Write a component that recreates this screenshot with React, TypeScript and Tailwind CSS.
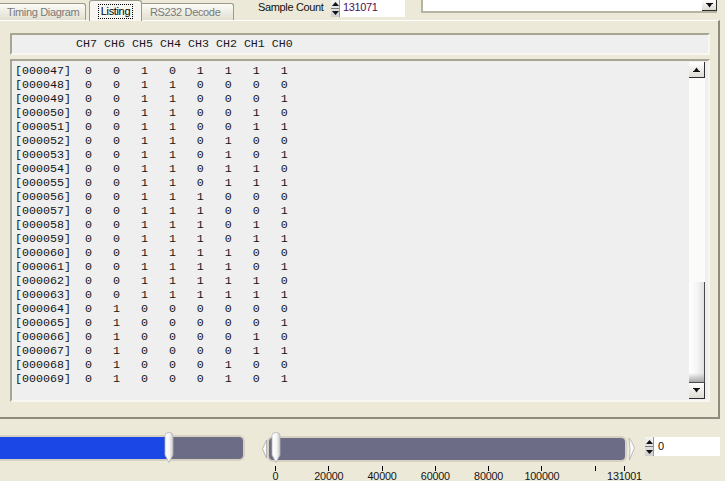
import React from "react";

const rows = Array.from({ length: 23 }, (_, i) => 47 + i);
const bits = (n: number) => n.toString(2).padStart(8, "0").split("");
const ticks = [0, 20000, 40000, 60000, 80000, 100000, 120000, 131001];
const labeled = new Set([0, 20000, 40000, 60000, 80000, 100000, 131001]);

function Thumb({ id }: { id: string }) {
  return (
    <svg width="10" height="31" viewBox="0 0 10 31">
      <defs>
        <linearGradient id={id} x1="0" x2="1" y1="0" y2="0">
          <stop offset="0" stopColor="#ffffff" />
          <stop offset="0.55" stopColor="#f6f6f6" />
          <stop offset="1" stopColor="#c9c9c9" />
        </linearGradient>
      </defs>
      <path d="M1 3.5 Q1 0.5 5 0.5 Q9 0.5 9 3.5 V23 L5 30.5 L1 23 Z" fill={`url(#${id})`} stroke="#b4b4b4" strokeWidth="0.8" />
    </svg>
  );
}

function Arrow({ down }: { down?: boolean }) {
  return (
    <svg width="7" height="5" viewBox="0 0 7 5">
      {down ? (
        <path d="M0 0H7V1H0Z M1 1H6L3.5 4.5Z" fill="#111" />
      ) : (
        <path d="M3.5 0.5L6 4H1Z M0 4H7V5H0Z" fill="#111" />
      )}
    </svg>
  );
}

function ScrollBtn({ down }: { down?: boolean }) {
  return (
    <div className="w-[16px] h-[16px] shrink-0 bg-gradient-to-b from-white to-[#dedcd6] border-r border-b border-[#2e2e2e] flex items-center justify-center">
      <Arrow down={down} />
    </div>
  );
}

function Spinner({ h }: { h: string }) {
  return (
    <div className={`w-[9px] ${h} flex flex-col bg-gradient-to-b from-[#f4f4f4] to-[#cfcfcf] border-r border-[#9a9a9a]`}>
      <div className="flex-1 flex items-center justify-center border-b border-[#7a7a7a]">
        <svg width="7" height="4" viewBox="0 0 7 4"><path d="M3.5 0L7 4H0Z" fill="#111" /></svg>
      </div>
      <div className="flex-1 flex items-center justify-center">
        <svg width="7" height="4" viewBox="0 0 7 4"><path d="M0 0H7L3.5 4Z" fill="#111" /></svg>
      </div>
    </div>
  );
}

export default function App() {
  const tx = (v: number) => 13 + (v * 349) / 131001;
  return (
    <div className="w-[725px] h-[481px] bg-[#ece9d8] overflow-hidden flex flex-col text-[11px] tracking-[-0.35px] text-black font-['Liberation_Sans',sans-serif]">
      {/* top bar */}
      <div className="h-[20px] flex shrink-0 relative z-10">
        <div className="w-[86px] h-[17px] mt-[3px] border-t border-r border-[#9c9a8c] rounded-tr-[3px] bg-gradient-to-b from-[#fbfbf8] to-[#e2dfd0] text-[#7a7a7a] pl-[7px] leading-[16px]">
          Timing Diagram
        </div>
        <div className="ml-[3px] w-[53px] h-[21px] border-t border-l border-r border-[#9c9a8c] rounded-t-[3px] bg-[#f6f5f0] flex justify-center pt-[3px]">
          <span className="border border-dotted border-black px-[2px] h-[15px] leading-[13px]">Listing</span>
        </div>
        <div className="w-[92px] h-[17px] mt-[3px] border-t border-r border-[#9c9a8c] rounded-tr-[3px] bg-gradient-to-b from-[#fbfbf8] to-[#e2dfd0] text-[#7a7a7a] pl-[8px] leading-[16px]">
          RS232 Decode
        </div>
        <div className="ml-[24px] w-[73px] leading-[15px] text-[#111]">Sample Count</div>
        <div className="flex h-[17px]">
          <Spinner h="h-[17px]" />
          <div className="w-[65px] h-[17px] bg-white pl-[3px] leading-[15px] text-[#4d0f55]">131071</div>
        </div>
        <div className="ml-[16px] w-[296px] h-[13px] bg-white border-l-2 border-b-2 border-[#b7b3a2] flex justify-end">
          <div className="w-[15px] h-[11px] bg-gradient-to-b from-white to-[#dcdad3] border-r border-b border-[#2e2e2e] flex items-center justify-center">
            <Arrow down />
          </div>
        </div>
      </div>

      {/* panel */}
      <div className="w-[720px] h-[399px] shrink-0 border-t border-t-white border-r-2 border-r-[#8e8b7e] border-b-2 border-b-[#8e8b7e] pt-[12px] pl-[10px] font-['Liberation_Mono',monospace] text-[11.67px] tracking-normal">
        <div className="w-[700px] h-[22px] border-t-2 border-l-2 border-[#a9a593] border-b-2 border-r-2 border-b-[#f7f6f1] border-r-[#f7f6f1] bg-[#efefef] pl-[64px] leading-[18px] whitespace-pre text-[#1a1a1a]">
          CH7 CH6 CH5 CH4 CH3 CH2 CH1 CH0
        </div>
        <div className="mt-[4px] w-[700px] h-[343px] border-t-2 border-l-2 border-[#a9a593] border-b-2 border-r-2 border-b-[#f7f6f1] border-r-[#f7f6f1] bg-[#efefef] flex">
          <div className="flex-1 pl-[3px] pt-[3px]">
            {rows.map((n) => (
              <div key={n} className="h-[14px] leading-[14px] whitespace-pre text-[#141414]">
                {`[${String(n).padStart(6, "0")}]  ` + bits(n).join("   ")}
              </div>
            ))}
          </div>
          <div className="w-[16px] mr-[3px] my-[1px] bg-[#fbfbf9] flex flex-col">
            <ScrollBtn />
            <div className="flex-1 flex flex-col justify-end">
              <div className="h-[101px] border-r border-b border-[#4a4a4a] bg-gradient-to-r from-white via-[#f6f6f6] to-[#e2e2e2] flex flex-col">
                <div className="flex-1" />
                <div className="h-[9px] bg-gradient-to-b from-transparent to-[#a8a8a8]" />
              </div>
            </div>
            <ScrollBtn down />
          </div>
        </div>
      </div>

      {/* bottom */}
      <div className="flex items-start flex-1">
        <div className="relative w-[245px] h-[26px] mt-[16px]">
          <div className="w-full h-full border-y-2 border-r-2 border-[#d6d2c1] rounded-r-[6px] overflow-hidden flex">
            <div className="w-[167px] bg-[#1b47e6]" />
            <div className="flex-1 bg-[#6d6c87]" />
          </div>
          <div className="absolute left-[164px] top-[-3px]">
            <Thumb id="t1" />
          </div>
        </div>

        <div className="ml-[17px] mt-[17px] w-[374px] relative">
          <div className="flex items-center h-[26px]">
            <svg width="5" height="20" viewBox="0 0 5 20">
              <path d="M4.5 1 L0.5 10 L4.5 19 Z" fill="#fafafa" stroke="#a8a8a8" strokeWidth="0.8" />
            </svg>
            <div className="w-[361px] h-[26px] border-2 border-[#d6d2c1] rounded-[6px] bg-[#6d6c87]" />
            <svg width="8" height="24" viewBox="0 0 8 24" className="ml-[1px]">
              <path d="M1 1 Q5 6 6.5 11 L1.5 23 L2 13 Z" fill="#fafafa" stroke="#b0b0b0" strokeWidth="0.8" />
            </svg>
          </div>
          <div className="absolute left-[9px] top-[-4px]">
            <Thumb id="t2" />
          </div>
          <div className="relative h-[20px] text-[10.8px] tracking-[-0.2px] text-[#151515]">
            {ticks.map((v) => (
              <React.Fragment key={v}>
                <div className="absolute top-[4px] w-[1px] h-[5px] bg-black" style={{ left: Math.round(tx(v)) }} />
                {labeled.has(v) && (
                  <div className="absolute top-[8px] leading-[12px] -translate-x-1/2" style={{ left: tx(v) + 0.5 }}>
                    {v}
                  </div>
                )}
              </React.Fragment>
            ))}
          </div>
        </div>

        <div className="ml-[9px] mt-[18px] flex h-[19px]">
          <Spinner h="h-[19px]" />
          <div className="w-[66px] h-[19px] bg-white pl-[4px] leading-[18px] text-[#111]">0</div>
        </div>
      </div>
    </div>
  );
}
